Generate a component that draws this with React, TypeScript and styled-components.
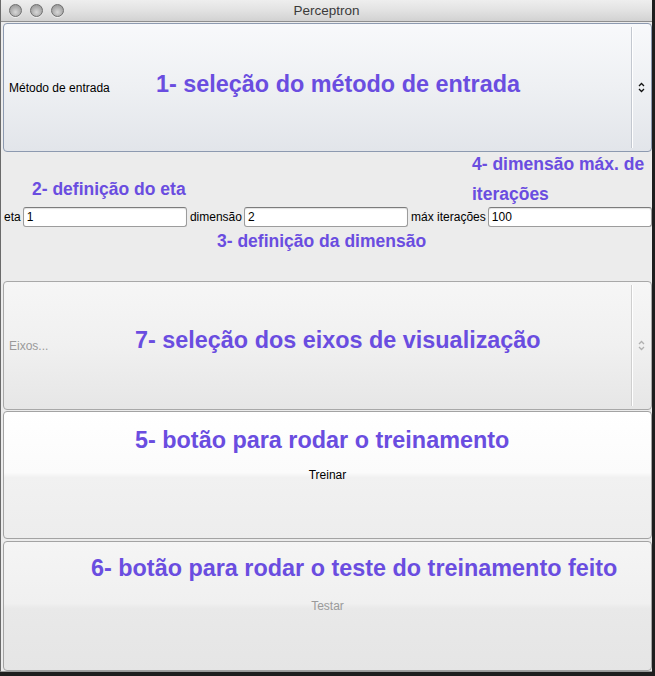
import React from "react";
import styled, { createGlobalStyle } from "styled-components";

const GlobalStyle = createGlobalStyle`
  html, body {
    margin: 0;
    padding: 0;
    background: #1e1e1e;
  }
  body {
    font-family: "Liberation Sans", Arial, sans-serif;
    width: 655px;
    height: 676px;
    overflow: hidden;
  }
  * { box-sizing: border-box; }
`;

const Window = styled.div`
  position: relative;
  width: 652px;
  height: 672px;
  background: #ececec;
  display: flex;
  flex-direction: column;
  border-left: 1px solid #6a6a6a;
  border-bottom: 1px solid #9a9a9a;
  overflow: hidden;
`;

const TitleBar = styled.div`
  position: relative;
  height: 22px;
  flex: 0 0 22px;
  background: linear-gradient(#eeeeee 0%, #e2e2e2 50%, #d2d2d2 100%);
  border-bottom: 1px solid #8f8f8f;
  display: flex;
  align-items: center;
  padding-left: 8px;
`;

const Lights = styled.div`
  display: flex;
  gap: 8px;
  align-items: center;
`;

const Light = styled.span`
  width: 13px;
  height: 13px;
  border-radius: 50%;
  border: 1px solid #6e6e6e;
  background: radial-gradient(circle at 50% 65%, #d8d8d8 0%, #b4b4b4 45%, #8c8c8c 100%);
  box-shadow: 0 1px 0 rgba(255, 255, 255, 0.6);
`;

const Title = styled.div`
  position: absolute;
  left: 0;
  right: 0;
  top: 0;
  line-height: 22px;
  text-align: center;
  font-size: 13.5px;
  color: #3a3a3a;
  pointer-events: none;
`;

const Content = styled.div`
  flex: 1;
  display: flex;
  flex-direction: column;
  padding: 1px 0 0 2px;
`;

const ComboBox = styled.div<{ $disabled?: boolean }>`
  height: 129px;
  flex: 0 0 129px;
  display: flex;
  align-items: center;
  border-radius: 4px;
  border: 1px solid ${(p) => (p.$disabled ? "#a8a8a8" : "#8d9ab0")};
  background: ${(p) =>
    p.$disabled
      ? "linear-gradient(#f6f6f6 0%, #f0f0f0 50%, #e6e6e6 100%)"
      : "linear-gradient(#f8f9fb 0%, #eef0f3 50%, #e2e5ea 100%)"};
`;

const ComboLabel = styled.span<{ $disabled?: boolean }>`
  flex: 1;
  padding-left: 5px;
  font-size: 12px;
  color: ${(p) => (p.$disabled ? "#9a9a9a" : "#000")};
`;

const ArrowCell = styled.div<{ $disabled?: boolean }>`
  align-self: stretch;
  width: 20px;
  margin: 3px 0;
  border-left: 1px solid ${(p) => (p.$disabled ? "#cfcfcf" : "#c3c8d0")};
  box-shadow: inset 1px 0 0 #ffffff;
  display: flex;
  align-items: center;
  justify-content: center;
  color: ${(p) => (p.$disabled ? "#b0b0b0" : "#111")};
`;

const ParamArea = styled.div`
  height: 129px;
  flex: 0 0 129px;
  display: flex;
  align-items: center;
  padding-left: 1px;
`;

const ParamRow = styled.div`
  flex: 1;
  display: flex;
  align-items: center;
`;

const FieldLabel = styled.span`
  font-size: 12px;
  color: #000;
  margin-right: 2px;
  white-space: nowrap;
`;

const TextField = styled.input`
  flex: 1;
  min-width: 0;
  height: 20px;
  margin-right: 3px;
  padding: 1px 3px 0;
  border: 1px solid #9c9c9c;
  border-top-color: #7c7c7c;
  border-radius: 3px;
  background: #fff;
  box-shadow: inset 0 1px 1px rgba(0, 0, 0, 0.12);
  font-family: "Liberation Sans", Arial, sans-serif;
  font-size: 12px;
  color: #000;
  outline: none;
  &:last-child {
    margin-right: 0;
  }
`;

const PushButton = styled.button<{ $disabled?: boolean; $h: number; $mt: number }>`
  height: ${(p) => p.$h}px;
  flex: 0 0 ${(p) => p.$h}px;
  margin-top: ${(p) => p.$mt}px;
  width: 100%;
  border-radius: 4px;
  border: 1px solid #a3a3a3;
  background: ${(p) =>
    p.$disabled
      ? "linear-gradient(#f5f5f5 0%, #f0f0f0 48%, #e9e9e9 52%, #e5e5e5 100%)"
      : "linear-gradient(#ffffff 0%, #fbfbfb 48%, #f1f1f1 52%, #ededed 100%)"};
  font-family: "Liberation Sans", Arial, sans-serif;
  font-size: 12px;
  color: ${(p) => (p.$disabled ? "#9a9a9a" : "#000")};
  padding: 0;
`;

const Callout = styled.div<{ $top: number; $left: number; $size: number; $lh?: number }>`
  position: absolute;
  top: ${(p) => p.$top}px;
  left: ${(p) => p.$left}px;
  font-family: "Liberation Sans", Arial, sans-serif;
  font-weight: bold;
  font-size: ${(p) => p.$size}px;
  line-height: ${(p) => (p.$lh ? `${p.$lh}px` : "1")};
  color: #6a4de0;
  white-space: nowrap;
  pointer-events: none;
`;

const UpDown = () => (
  <svg width="7" height="11" viewBox="0 0 7 11" fill="none" stroke="currentColor" strokeWidth="1.3">
    <polyline points="1,4 3.5,1.5 6,4" />
    <polyline points="1,7 3.5,9.5 6,7" />
  </svg>
);

export default function App() {
  return (
    <>
      <GlobalStyle />
      <Window>
        <TitleBar>
          <Lights>
            <Light />
            <Light />
            <Light />
          </Lights>
          <Title>Perceptron</Title>
        </TitleBar>
        <Content>
          <ComboBox>
            <ComboLabel>Método de entrada</ComboLabel>
            <ArrowCell>
              <UpDown />
            </ArrowCell>
          </ComboBox>
          <ParamArea>
            <ParamRow>
              <FieldLabel>eta</FieldLabel>
              <TextField defaultValue="1" />
              <FieldLabel>dimensão</FieldLabel>
              <TextField defaultValue="2" />
              <FieldLabel>máx iterações</FieldLabel>
              <TextField defaultValue="100" />
            </ParamRow>
          </ParamArea>
          <ComboBox $disabled>
            <ComboLabel $disabled>Eixos...</ComboLabel>
            <ArrowCell $disabled>
              <UpDown />
            </ArrowCell>
          </ComboBox>
          <PushButton $h={128} $mt={1}>Treinar</PushButton>
          <PushButton $h={130} $mt={2} $disabled>
            Testar
          </PushButton>
        </Content>

        <Callout $top={73} $left={155} $size={23.4}>1- seleção do método de entrada</Callout>
        <Callout $top={149} $left={471} $size={17.5} $lh={30}>
          4- dimensão máx. de
          <br />
          iterações
        </Callout>
        <Callout $top={181} $left={31} $size={17.5}>2- definição do eta</Callout>
        <Callout $top={233} $left={216} $size={17.5}>3- definição da dimensão</Callout>
        <Callout $top={329} $left={134} $size={23.4}>7- seleção dos eixos de visualização</Callout>
        <Callout $top={429} $left={134} $size={23.4}>5- botão para rodar o treinamento</Callout>
        <Callout $top={557} $left={90} $size={23.4}>6- botão para rodar o teste do treinamento feito</Callout>
      </Window>
    </>
  );
}
